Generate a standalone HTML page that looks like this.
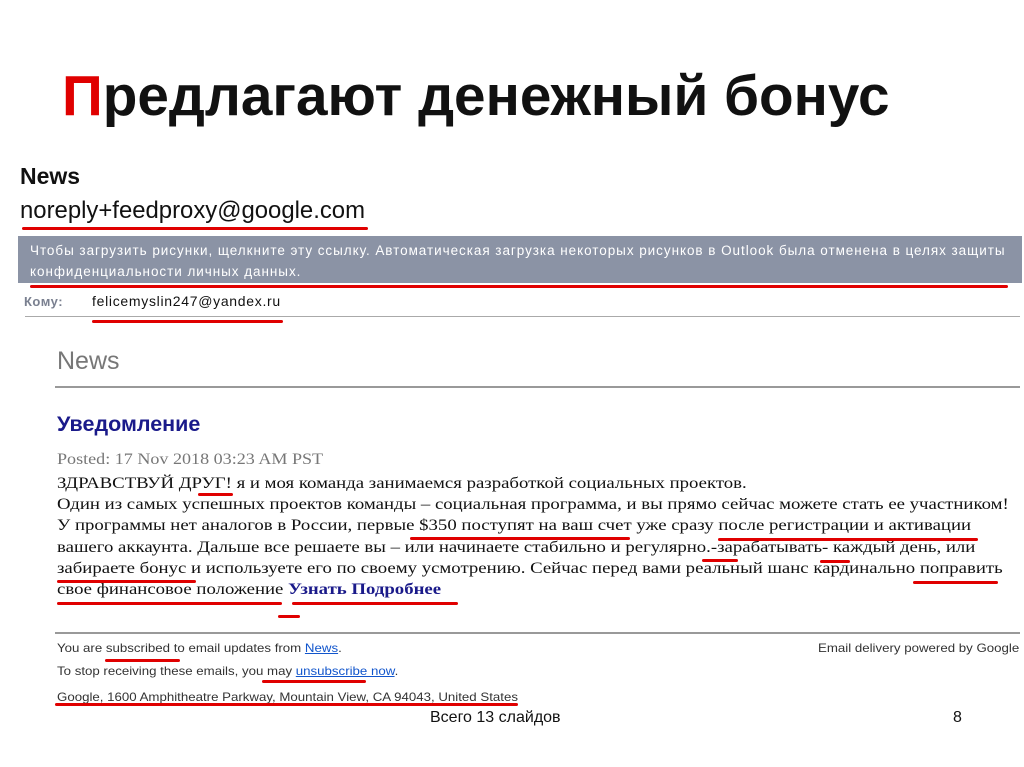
<!DOCTYPE html>
<html><head><meta charset="utf-8"><style>
body{margin:0;width:1024px;height:767px;background:#fff;position:relative;overflow:hidden;font-family:"Liberation Sans",sans-serif}
.a{position:absolute;white-space:nowrap}
.r{position:absolute;height:3px;background:#e00000;border-radius:2px}
.s{font-family:"Liberation Serif",serif;font-size:16.3px;color:#111;transform-origin:0 0}
.f{font-size:12px;color:#333;transform:scaleX(1.105);transform-origin:0 0}
.hl{position:absolute;height:1px;background:#aaa}
</style></head><body>
<div class="a" style="left:62px;top:64px;font-size:56.7px;font-weight:bold;color:#111"><span style="color:#e00000">П</span>редлагают денежный бонус</div>
<div class="a" style="left:20px;top:163px;font-size:23px;font-weight:bold;color:#111">News</div>
<div class="a" style="left:20px;top:197px;font-size:23.9px;color:#111">noreply+feedproxy@google.com</div>
<div class="a" style="left:18px;top:236px;width:1004px;height:47px;background:#8b93a5"></div>
<div class="a" style="left:30px;top:240px;font-size:13.5px;letter-spacing:0.95px;color:#fff;line-height:21px">Чтобы загрузить рисунки, щелкните эту ссылку. Автоматическая загрузка некоторых рисунков в Outlook была отменена в целях защиты<br>конфиденциальности личных данных.</div>
<div class="a" style="left:24px;top:294px;font-size:13px;font-weight:bold;color:#7a8090;letter-spacing:0.5px">Кому:</div>
<div class="a" style="left:92px;top:293px;font-size:14px;letter-spacing:0.7px;color:#111">felicemyslin247@yandex.ru</div>
<div class="hl" style="left:25px;top:316px;width:995px"></div>
<div class="a" style="left:57px;top:347px;font-size:25px;color:#777">News</div>
<div class="hl" style="left:55px;top:386px;width:965px;background:#999;height:2px"></div>
<div class="a" style="left:57px;top:412px;font-size:21.5px;font-weight:bold;color:#1a1a8a">Уведомление</div>
<div class="a s" style="left:57px;top:449px;color:#777;transform:scaleX(1.11)">Posted: 17 Nov 2018 03:23 AM PST</div>
<div class="a s" style="left:57px;top:472px;line-height:21.2px;transform:scaleX(1.153)">ЗДРАВСТВУЙ ДРУГ! я и моя команда занимаемся разработкой социальных проектов.<br>Один из самых успешных проектов команды – социальная программа, и вы прямо сейчас можете стать ее участником!<br>У программы нет аналогов в России, первые $350 поступят на ваш счет уже сразу после регистрации и активации<br>вашего аккаунта. Дальше все решаете вы – или начинаете стабильно и регулярно.-зарабатывать- каждый день, или<br>забираете бонус и используете его по своему усмотрению. Сейчас перед вами реальный шанс кардинально поправить<br>свое финансовое положение <b style="color:#1a1a8a">Узнать Подробнее</b></div>
<div class="hl" style="left:55px;top:632px;width:965px;background:#999;height:2px"></div>
<div class="a f" style="left:57px;top:641px">You are subscribed to email updates from <span style="color:#1155cc;text-decoration:underline">News</span>.</div>
<div class="a f" style="left:57px;top:664px">To stop receiving these emails, you may <span style="color:#1155cc;text-decoration:underline">unsubscribe now</span>.</div>
<div class="a f" style="left:57px;top:690px">Google, 1600 Amphitheatre Parkway, Mountain View, CA 94043, United States</div>
<div class="a f" style="left:818px;top:641px">Email delivery powered by Google</div>
<div class="a" style="left:430px;top:709px;font-size:16px;color:#111">Всего 13 слайдов</div>
<div class="a" style="left:953px;top:709px;font-size:16px;color:#111">8</div>
<div class="r" style="left:22px;top:227px;width:346px"></div>
<div class="r" style="left:30px;top:285px;width:978px"></div>
<div class="r" style="left:92px;top:320px;width:191px"></div>
<div class="r" style="left:198px;top:493px;width:35px"></div>
<div class="r" style="left:410px;top:537px;width:220px"></div>
<div class="r" style="left:718px;top:538px;width:260px"></div>
<div class="r" style="left:702px;top:559px;width:36px"></div>
<div class="r" style="left:820px;top:560px;width:30px"></div>
<div class="r" style="left:57px;top:580px;width:139px"></div>
<div class="r" style="left:913px;top:581px;width:85px"></div>
<div class="r" style="left:57px;top:602px;width:225px"></div>
<div class="r" style="left:292px;top:602px;width:166px"></div>
<div class="r" style="left:278px;top:615px;width:22px"></div>
<div class="r" style="left:105px;top:659px;width:75px"></div>
<div class="r" style="left:262px;top:680px;width:104px"></div>
<div class="r" style="left:55px;top:703px;width:463px"></div>
</body></html>
